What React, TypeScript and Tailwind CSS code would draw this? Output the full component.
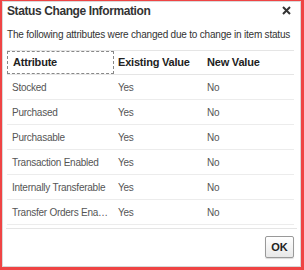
import React from "react";

const rows = [
  { attr: "Stocked", existing: "Yes", next: "No" },
  { attr: "Purchased", existing: "Yes", next: "No" },
  { attr: "Purchasable", existing: "Yes", next: "No" },
  { attr: "Transaction Enabled", existing: "Yes", next: "No" },
  { attr: "Internally Transferable", existing: "Yes", next: "No" },
  { attr: "Transfer Orders Enabled", existing: "Yes", next: "No" },
];

export default function App() {
  return (
    <div
      className="w-[304px] h-[270px] bg-[#ef4444] pl-[2px] pt-[1px] pr-[3px] pb-[3px]"
      style={{ fontFamily: '"Liberation Sans", Arial, sans-serif' }}
    >
      <div className="h-full flex flex-col bg-white border border-[#d9d9d9]">
        {/* title bar */}
        <div className="flex items-center justify-between pl-[4px] pr-[9px] h-[17px]">
          <span className="text-[12px] font-bold tracking-[-0.4px] text-[#333]">
            Status Change Information
          </span>
          <svg width="9" height="9" viewBox="0 0 9 9" className="text-[#333]">
            <path d="M1 1L8 8M8 1L1 8" stroke="currentColor" strokeWidth="2" />
          </svg>
        </div>

        <p className="mt-[8px] pl-[4px] text-[10px] leading-[15px] tracking-[-0.2px] text-[#333] whitespace-nowrap">
          The following attributes were changed due to change in item status
        </p>

        {/* table */}
        <div className="mt-[8px] ml-[4px] mr-[6px]">
          <div className="flex h-[25px] items-center border-t border-[#e5e5e5] border-b border-b-[#e5e5e5] text-[11px] tracking-[-0.2px] font-bold text-[#222]">
            <div className="w-[107px] h-full flex items-center pl-[5px] border border-dashed border-[#888]">
              Attribute
            </div>
            <div className="w-[93px] pl-[4px]">Existing Value</div>
            <div className="flex-1">New Value</div>
          </div>
          {rows.map((r) => (
            <div
              key={r.attr}
              className="flex h-[25px] items-center border-b border-[#ececec] text-[10px] tracking-[-0.25px] text-[#555]"
            >
              <div className="w-[107px] pl-[5px] pr-[4px] truncate">{r.attr}</div>
              <div className="w-[93px] pl-[4px]">{r.existing}</div>
              <div className="flex-1">{r.next}</div>
            </div>
          ))}
        </div>

        <div className="mt-[3px] border-t border-[#e5e5e5] mx-[3px]" />

        <div className="flex justify-end pr-[6px] pt-[7px]">
          <button className="w-[29px] h-[22px] border border-[#999] bg-gradient-to-b from-white to-[#e8e8e8] rounded-[2px] text-[11px] font-bold text-[#222] shadow-[0_1px_1px_rgba(0,0,0,0.15)]">
            OK
          </button>
        </div>
      </div>
    </div>
  );
}
